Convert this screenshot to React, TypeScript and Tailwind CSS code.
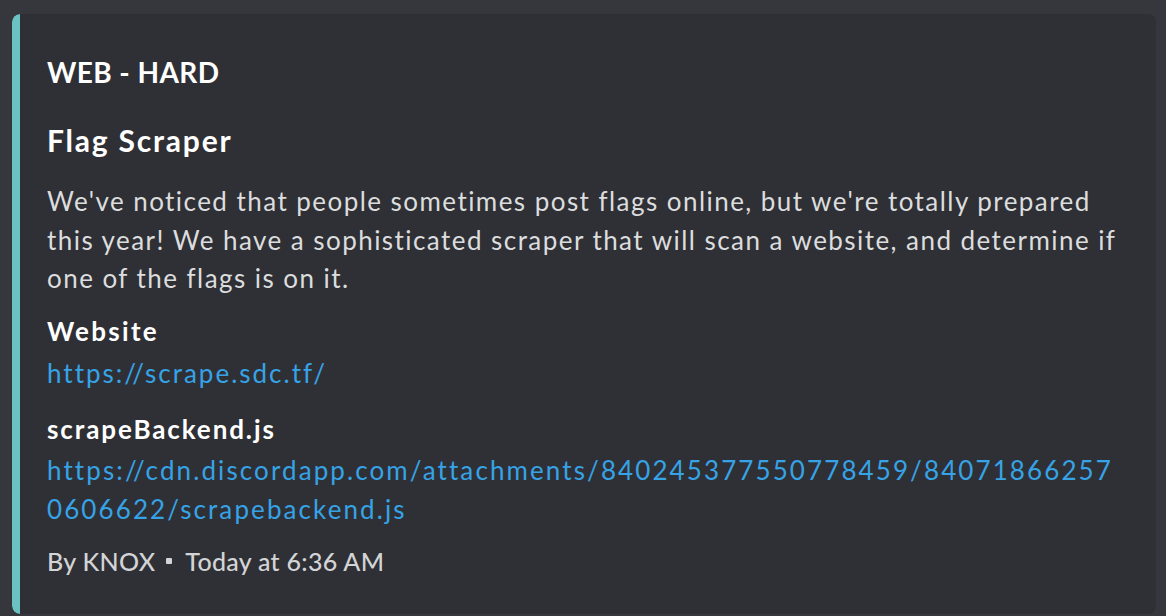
export default function App() {
  const font = { fontFamily: "Lato, 'Open Sans', sans-serif" };

  return (
    <div
      className="w-[1166px] h-[616px] bg-[#36373c] pt-[14px] pl-[12px] overflow-hidden"
      style={font}
    >
      <div className="flex w-[1144px] h-[600px] rounded-[8px] bg-[#2f3035] overflow-hidden">
        <div className="w-[8px] shrink-0 bg-[#6bc3c1] rounded-l-[8px]"></div>
        <div className="flex flex-col pl-[27px] pt-[40px]">
          <div className="text-[28px] leading-[36px] font-bold text-white tracking-[0.4px]">
            WEB - HARD
          </div>
          <div className="mt-[30px] text-[30px] leading-[40px] font-bold text-white tracking-[1.8px]">
            Flag Scraper
          </div>
          <p className="mt-[22px] text-[26px] leading-[38.5px] text-[#dcddde] whitespace-nowrap tracking-[1.45px]">
            We've noticed that people sometimes post flags online, but we're totally prepared
            <br />
            this year! We have a sophisticated scraper that will scan a website, and determine if
            <br />
            one of the flags is on it.
          </p>
          <div className="mt-[14px]">
            <div className="text-[26px] leading-[38.5px] font-bold text-white tracking-[2.3px]">
              Website
            </div>
            <div className="pt-[3px] text-[26px] leading-[40px] text-[#36a3e6] tracking-[2px]">
              https://scrape.sdc.tf/
            </div>
          </div>
          <div className="mt-[17px]">
            <div className="text-[26px] leading-[38.5px] font-bold text-white tracking-[1.9px]">
              scrapeBackend.js
            </div>
            <div className="pt-[2px] text-[26px] leading-[39.5px] text-[#36a3e6] whitespace-nowrap tracking-[2.1px]">
              https://cdn.discordapp.com/attachments/840245377550778459/84071866257
              <br />
              0606622/scrapebackend.js
            </div>
          </div>
          <div className="mt-[12px] flex items-center text-[25px] leading-[38px] font-medium text-[#d3d4d6] tracking-[0.3px]">
            <span>By KNOX</span>
            <span className="ml-[11px] mr-[13px] inline-block w-[6px] h-[6px] rounded-[1px] bg-[#d3d4d6]"></span>
            <span>Today at 6:36 AM</span>
          </div>
        </div>
      </div>
    </div>
  );
}
